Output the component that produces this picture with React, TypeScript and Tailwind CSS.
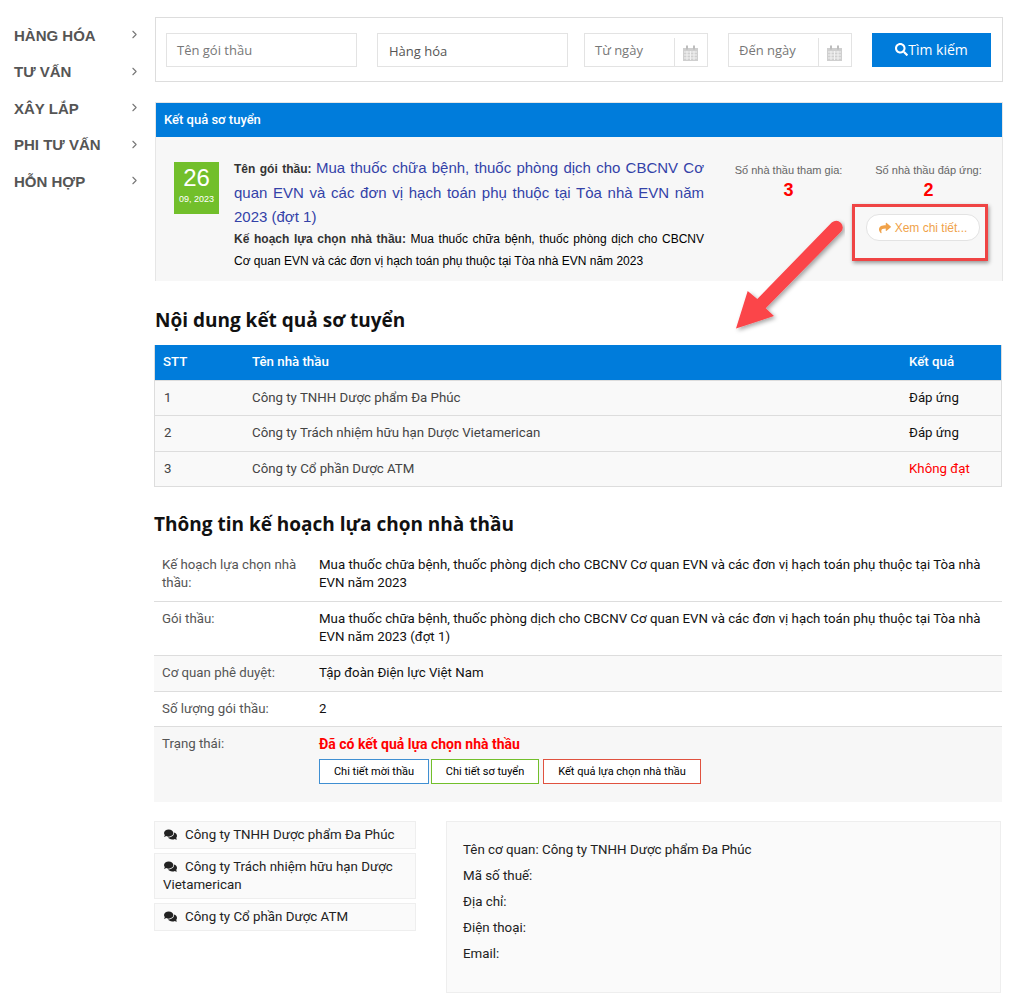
import { ChevronRight } from "lucide-react";
import { FaComments, FaSearch, FaShare } from "react-icons/fa";

const MENU = ["HÀNG HÓA", "TƯ VẤN", "XÂY LẮP", "PHI TƯ VẤN", "HỖN HỢP"];

const BIDDERS = [
  { name: "Công ty TNHH Dược phẩm Đa Phúc", result: "Đáp ứng", ok: true, row: "h-[35px]" },
  { name: "Công ty Trách nhiệm hữu hạn Dược Vietamerican", result: "Đáp ứng", ok: true, row: "h-[36px] pb-[1px]" },
  { name: "Công ty Cổ phần Dược ATM", result: "Không đạt", ok: false, row: "h-[35px]" },
];

const INFO = [
  {
    label: "Kế hoạch lựa chọn nhà thầu:",
    value: "Mua thuốc chữa bệnh, thuốc phòng dịch cho CBCNV Cơ quan EVN và các đơn vị hạch toán phụ thuộc tại Tòa nhà EVN năm 2023",
    row: "h-[55px] pt-[9px]",
  },
  {
    label: "Gói thầu:",
    value: "Mua thuốc chữa bệnh, thuốc phòng dịch cho CBCNV Cơ quan EVN và các đơn vị hạch toán phụ thuộc tại Tòa nhà EVN năm 2023 (đợt 1)",
    row: "h-[54px] pt-[8px]",
  },
  { label: "Cơ quan phê duyệt:", value: "Tập đoàn Điện lực Việt Nam", row: "h-[36px] pt-[8px] bg-[#f9f9f9]" },
  { label: "Số lượng gói thầu:", value: "2", row: "h-[35px] pt-[8px]" },
];

function CalendarIcon() {
  return (
    <svg width="15" height="16" viewBox="0 0 15 16" className="mt-[3px]">
      <path d="M0 3h15v13H0z" fill="#cfcfcf" />
      <path d="M3 0.5h2v4H3zM10 0.5h2v4h-2z" fill="#bdbdbd" />
      <path d="M1 7h13M1 10h13M1 13h13M4 6v9M7.5 6v9M11 6v9" stroke="#f2f2f2" strokeWidth="1" fill="none" />
    </svg>
  );
}

function DateField({ label }: { label: string }) {
  return (
    <div className="flex h-[34px] w-[124px] border border-[#e3e3e3]">
      <span className="flex-1 pl-[10px] font-['Open_Sans',sans-serif] text-[13px] leading-[32px] text-[#777]">{label}</span>
      <span className="mt-[4px] flex w-[33px] items-center justify-center border-l border-[#e3e3e3] pr-[2px]">
        <CalendarIcon />
      </span>
    </div>
  );
}

function SearchBar() {
  return (
    <div className="flex h-[65px] items-center border border-[#ddd] pl-[10px] font-['Open_Sans',sans-serif]">
      <div className="h-[34px] w-[191px] border border-[#e3e3e3] pl-[10px] text-[13px] leading-[32px] text-[#777]">
        Tên gói thầu
      </div>
      <div className="ml-[20px] h-[34px] w-[191px] border border-[#e3e3e3] pl-[11px] text-[13px] leading-[34px] text-[#555]">
        Hàng hóa
      </div>
      <div className="ml-[16px]">
        <DateField label="Từ ngày" />
      </div>
      <div className="ml-[20px]">
        <DateField label="Đến ngày" />
      </div>
      <button className="ml-[20px] flex h-[34px] w-[119px] items-center justify-center bg-[#007cdb] text-[14px] text-white">
        <FaSearch size={13} />
        Tìm kiếm
      </button>
    </div>
  );
}

function ResultPanel() {
  return (
    <div className="mt-[20px] h-[179px] border-x border-t border-[#e6e6e6] bg-[#f7f7f7]">
      <div className="h-[34px] bg-[#007cdb] pl-[8px] text-[13px] font-medium leading-[33px] text-white">
        Kết quả sơ tuyển
      </div>
      <div className="flex pl-[18px] pt-[25px]">
        <div className="h-[52px] w-[45px] bg-[#72bf2b] text-center font-['Liberation_Sans',sans-serif] text-white">
          <div className="pt-[2px] text-[24px] leading-[28px]">26</div>
          <div className="text-[9px] leading-[14px]">09, 2023</div>
        </div>
        <div className="ml-[15px] w-[470px] text-justify font-['Liberation_Sans',sans-serif] text-black">
          <div className="-mt-[6px] text-[15px] leading-[24px] text-[#3342a8]">
            <b className="text-[12px] text-[#333]">Tên gói thầu: </b>
            Mua thuốc chữa bệnh, thuốc phòng dịch cho CBCNV Cơ quan EVN và các đơn vị hạch toán phụ thuộc tại Tòa nhà EVN năm 2023 (đợt 1)
          </div>
          <div className="-mt-[1px] text-[12px] leading-[22px]">
            <b className="text-[#333]">Kế hoạch lựa chọn nhà thầu: </b>
            Mua thuốc chữa bệnh, thuốc phòng dịch cho CBCNV Cơ quan EVN và các đơn vị hạch toán phụ thuộc tại Tòa nhà EVN năm 2023
          </div>
        </div>
        <div className="ml-[14.5px] flex h-[60px] font-['Liberation_Sans',sans-serif]">
          <div className="w-[140px] text-center">
            <div className="text-[11px] leading-[16px] text-[#666]">Số nhà thầu tham gia:</div>
            <div className="text-[18px] font-bold leading-[24px] text-[#f00]">3</div>
          </div>
          <div className="w-[140px] text-center">
            <div className="text-[11px] leading-[16px] text-[#666]">Số nhà thầu đáp ứng:</div>
            <div className="text-[18px] font-bold leading-[24px] text-[#f00]">2</div>
            <div className="ml-[7.5px] mt-[12px] flex h-[27px] w-[114px] items-center justify-center gap-[4px] rounded-[13px] border border-[#e3e3e3] bg-white text-[12px] text-[#f0a24a]">
              <FaShare size={12} />
              Xem chi tiết...
            </div>
          </div>
        </div>
      </div>
    </div>
  );
}

function BidderTable() {
  return (
    <div className="ml-[-1px] mr-[1px] border-x border-b border-[#ddd] text-[13.27px] text-[#444]">
      <div className="flex h-[35px] items-center bg-[#007cdb] pb-[1px] font-medium text-white">
        <span className="w-[97px] pl-[8px]">STT</span>
        <span className="w-[657px]">Tên nhà thầu</span>
        <span>Kết quả</span>
      </div>
      {BIDDERS.map((b, i) => (
        <div key={b.name} className={`flex items-center border-t border-[#ddd] bg-[#f9f9f9] ${b.row}`}>
          <span className="w-[97px] pl-[9px]">{i + 1}</span>
          <span className="w-[657px]">{b.name}</span>
          <span className={b.ok ? "text-[#111]" : "text-[#f00]"}>{b.result}</span>
        </div>
      ))}
    </div>
  );
}

function PlanInfo() {
  return (
    <div className="ml-[-1px] mr-[1px] mt-[8px] text-[13.27px] leading-[18px]">
      {INFO.map((r) => (
        <div key={r.label} className={`flex border-b border-[#ddd] ${r.row}`}>
          <span className="w-[165px] pl-[8px] pr-[10px] text-[#555]">{r.label}</span>
          <span className="flex-1 pr-[10px] text-[#111]">{r.value}</span>
        </div>
      ))}
      <div className="flex h-[75px] bg-[#f7f7f7] pt-[8px]">
        <span className="w-[165px] pl-[8px] text-[#555]">Trạng thái:</span>
        <div>
          <div className="text-[14px] font-bold text-[#f00]">Đã có kết quả lựa chọn nhà thầu</div>
          <div className="mt-[6px] flex text-[11px] text-black">
            <span className="flex h-[25px] w-[110px] items-center justify-center border border-[#3f8fd2] bg-white">Chi tiết mời thầu</span>
            <span className="ml-[2px] flex h-[25px] w-[108px] items-center justify-center border border-[#72bf2b] bg-white">Chi tiết sơ tuyển</span>
            <span className="ml-[4px] flex h-[25px] w-[158px] items-center justify-center border border-[#e0523f] bg-white">Kết quả lựa chọn nhà thầu</span>
          </div>
        </div>
      </div>
    </div>
  );
}

function Contractors() {
  return (
    <div className="ml-[-1px] mt-[19px] flex items-start text-[13.33px] leading-[18px] text-[#222]">
      <div className="flex w-[262px] flex-col gap-[4px]">
        {BIDDERS.map((b) => (
          <div key={b.name} className="border border-[#eee] bg-[#fafafa] px-[8px] py-[4px]">
            <FaComments size={13} className="mr-[8px] ml-[1px] inline-block align-[-2px] text-[#222]" />
            {b.name}
          </div>
        ))}
      </div>
      <div className="ml-[30px] h-[172px] w-[555px] border border-[#eee] bg-[#fafafa] pl-[16px] pt-[15px] leading-[26px]">
        <div>Tên cơ quan: Công ty TNHH Dược phẩm Đa Phúc</div>
        <div>Mã số thuế:</div>
        <div>Địa chỉ:</div>
        <div>Điện thoại:</div>
        <div>Email:</div>
      </div>
    </div>
  );
}

export default function App() {
  return (
    <div className="relative flex min-h-[1001px] bg-white pt-[17px] font-['Roboto',sans-serif]">
      <nav className="w-[155px] shrink-0 pt-[0.5px]">
        {MENU.map((m) => (
          <div key={m} className="flex h-[36.5px] items-center justify-between pl-[14px] pr-[14px] font-['Liberation_Sans',sans-serif] text-[15px] font-bold text-[#555]">
            {m}
            <ChevronRight size={13} className="-mt-[2px] text-[#777]" />
          </div>
        ))}
      </nav>
      <main className="w-[848px]">
        <SearchBar />
        <ResultPanel />
        <h2 className="mt-[24px] font-['Open_Sans',sans-serif] text-[19px] font-bold leading-[30px] text-[#111]">
          Nội dung kết quả sơ tuyển
        </h2>
        <div className="mt-[10px]">
          <BidderTable />
        </div>
        <h2 className="ml-[-1px] mt-[22px] font-['Open_Sans',sans-serif] text-[19px] font-bold leading-[30px] text-[#111]">
          Thông tin kế hoạch lựa chọn nhà thầu
        </h2>
        <PlanInfo />
        <Contractors />
      </main>

      {/* callout box and arrow drawn on top of the page */}
      <div className="absolute left-[852px] top-[204px] h-[57px] w-[136px] border-[3px] border-[#ef4444] shadow-[1px_2px_4px_rgba(0,0,0,0.4)]" />
      <svg className="absolute left-[730px] top-[215px]" width="115" height="120" viewBox="0 0 115 120">
        <defs>
          <filter id="arrowShadow" x="-20%" y="-20%" width="140%" height="140%">
            <feDropShadow dx="2" dy="2" stdDeviation="2" floodColor="#000" floodOpacity="0.35" />
          </filter>
        </defs>
        <path
          d="M6 113.5 L17.7 76 L27.3 84 L101.7 7.5 Q106.7 4 111 8 Q114.5 12.5 111 16.7 L35.7 93.3 L44 101 Z"
          fill="#fb4449"
          filter="url(#arrowShadow)"
        />
      </svg>
    </div>
  );
}
